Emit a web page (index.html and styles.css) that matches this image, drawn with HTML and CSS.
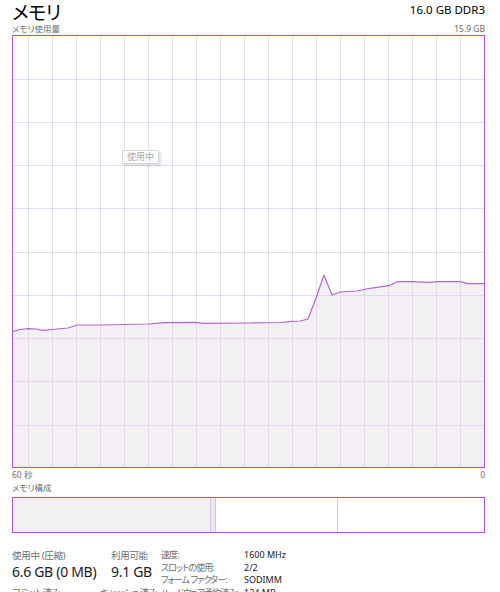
FILE: index.html
```html
<!DOCTYPE html>
<html lang="ja">
<head>
    <meta charset="UTF-8">
    <title>メモリ</title>
    <link rel="stylesheet" href="styles.css">
</head>
<body>
    <div class="panel">
        <div class="head">
            <h1>メモリ</h1>
            <span class="spec">16.0 GB DDR3</span>
        </div>
        <div class="caption">
            <span>メモリ使用量</span>
            <span>15.9 GB</span>
        </div>

        <div class="graph">
            <svg width="473" height="433" viewBox="0 0 473 433">
                <polygon class="fill" points="0,296.7 8,294.5 16,293.7 24,294 31,295.3 40,294.5 56,293 65,290 88,290 112,289.5 136,289 153,287.7 184,287.3 191,288.3 238,288 268,287.5 280,286.3 288,286 296,284 304,263 312,240 320,260 328,257 345,256 354,254 363,252.7 377,250.7 385,246.7 400,246.7 417,247.3 426,246.7 448,246.7 456,248.7 472,248.7 472,433 0,433"/>
                <g class="grid">
                    <path d="M16.5 0V433M40.5 0V433M64.5 0V433M88.5 0V433M112.5 0V433M136.5 0V433M160.5 0V433M184.5 0V433M208.5 0V433M232.5 0V433M256.5 0V433M280.5 0V433M304.5 0V433M328.5 0V433M352.5 0V433M376.5 0V433M400.5 0V433M424.5 0V433M448.5 0V433"/>
                    <path d="M0 44.5H473M0 87.5H473M0 130.5H473M0 173.5H473M0 217.5H473M0 260.5H473M0 303.5H473M0 346.5H473M0 390.5H473"/>
                </g>
                <polyline class="line" points="0,296.7 8,294.5 16,293.7 24,294 31,295.3 40,294.5 56,293 65,290 88,290 112,289.5 136,289 153,287.7 184,287.3 191,288.3 238,288 268,287.5 280,286.3 288,286 296,284 304,263 312,240 320,260 328,257 345,256 354,254 363,252.7 377,250.7 385,246.7 400,246.7 417,247.3 426,246.7 448,246.7 456,248.7 472,248.7"/>
                <rect class="frame" x="0.5" y="0.5" width="472" height="432"/>
            </svg>
            <span class="tag">使用中</span>
        </div>
        <div class="axis">
            <span>60 秒</span>
            <span>0</span>
        </div>

        <div class="caption">メモリ構成</div>
        <div class="compose">
            <div class="seg used"></div>
            <div class="seg modified"></div>
            <div class="seg standby"></div>
            <div class="seg free"></div>
        </div>

        <div class="stats">
            <div class="stat wide">
                <div class="label">使用中 (圧縮)</div>
                <div class="value">6.6 GB (0 MB)</div>
                <div class="label next">コミット済み</div>
            </div>
            <div class="stat">
                <div class="label">利用可能</div>
                <div class="value">9.1 GB</div>
                <div class="label next shifted">キャッシュ済み</div>
            </div>
            <dl class="details">
                <dt>速度:</dt><dd>1600 MHz</dd>
                <dt>スロットの使用:</dt><dd>2/2</dd>
                <dt>フォーム ファクター:</dt><dd>SODIMM</dd>
                <dt>ハードウェア予約済み:</dt><dd>124 MB</dd>
            </dl>
        </div>
    </div>
</body>
</html>
```

FILE: styles.css
```css
body { margin: 0; background-color: #fff; color: #000; font-family: "Noto Sans", "Noto Sans CJK JP", sans-serif; font-feature-settings: "palt"; overflow: hidden; }
.panel { width: 473px; padding: 0 12px; }

.head { display: flex; justify-content: space-between; align-items: flex-end; height: 22px; }
.head h1 { margin: -6px 0 0 0; font-size: 19px; font-weight: normal; line-height: 20px; letter-spacing: -0.5px; font-family: "Noto Sans CJK JP", sans-serif; font-feature-settings: "palt"; }
.spec { font-size: 11.5px; line-height: 16px; margin-bottom: 4px; }

.caption { display: flex; justify-content: space-between; font-size: 8.5px; line-height: 13px; color: #6d6d6d; }

.graph { position: relative; height: 433px; }
.graph svg { display: block; }
.graph .fill { fill: #f2f0f3; }
.graph .grid path { stroke: #e2c8ec; stroke-width: 1; opacity: 0.7; fill: none; }
.graph .line { fill: none; stroke: #b367d2; stroke-width: 1.2; stroke-linejoin: round; }
.graph .frame { fill: none; stroke: #b14fd3; stroke-width: 1; }
.tag { position: absolute; left: 110px; top: 115px; padding: 0 4px; font-size: 9px; line-height: 12px; color: #a8a8a8; background-color: #fff; border: 1px solid #d8d8d8; box-shadow: 2px 2px 2px rgba(0, 0, 0, 0.12); }

.axis { display: flex; justify-content: space-between; font-size: 8.5px; line-height: 13px; color: #6d6d6d; }

.compose { display: flex; height: 34px; margin-top: 3px; border: 1px solid #b14fd3; }
.seg { height: 100%; }
.used { width: 197px; background-color: #f2f0f3; }
.modified { width: 4px; background-color: #efe6f2; border-left: 1px solid #dcc3e6; border-right: 1px solid #dcc3e6; }
.standby { width: 121px; border-right: 1px solid #dcc3e6; }
.free { flex: 1; }

.stats { display: flex; margin-top: 16px; }
.stat { width: 50px; }
.stat.wide { width: 99px; }
.label { font-size: 9.5px; line-height: 13px; color: #6d6d6d; white-space: nowrap; letter-spacing: -0.3px; }
.label.next { margin-top: 4px; }
.label.shifted { margin-left: -11px; }
.value { font-size: 14px; line-height: 20px; letter-spacing: -0.3px; color: #1a1a1a; white-space: nowrap; }
.details { display: grid; grid-template-columns: 83px auto; margin: 0; font-size: 9px; line-height: 12.5px; }
.details dt { color: #6d6d6d; white-space: nowrap; letter-spacing: -0.9px; }
.details dd { margin: 0; color: #1a1a1a; }
```
